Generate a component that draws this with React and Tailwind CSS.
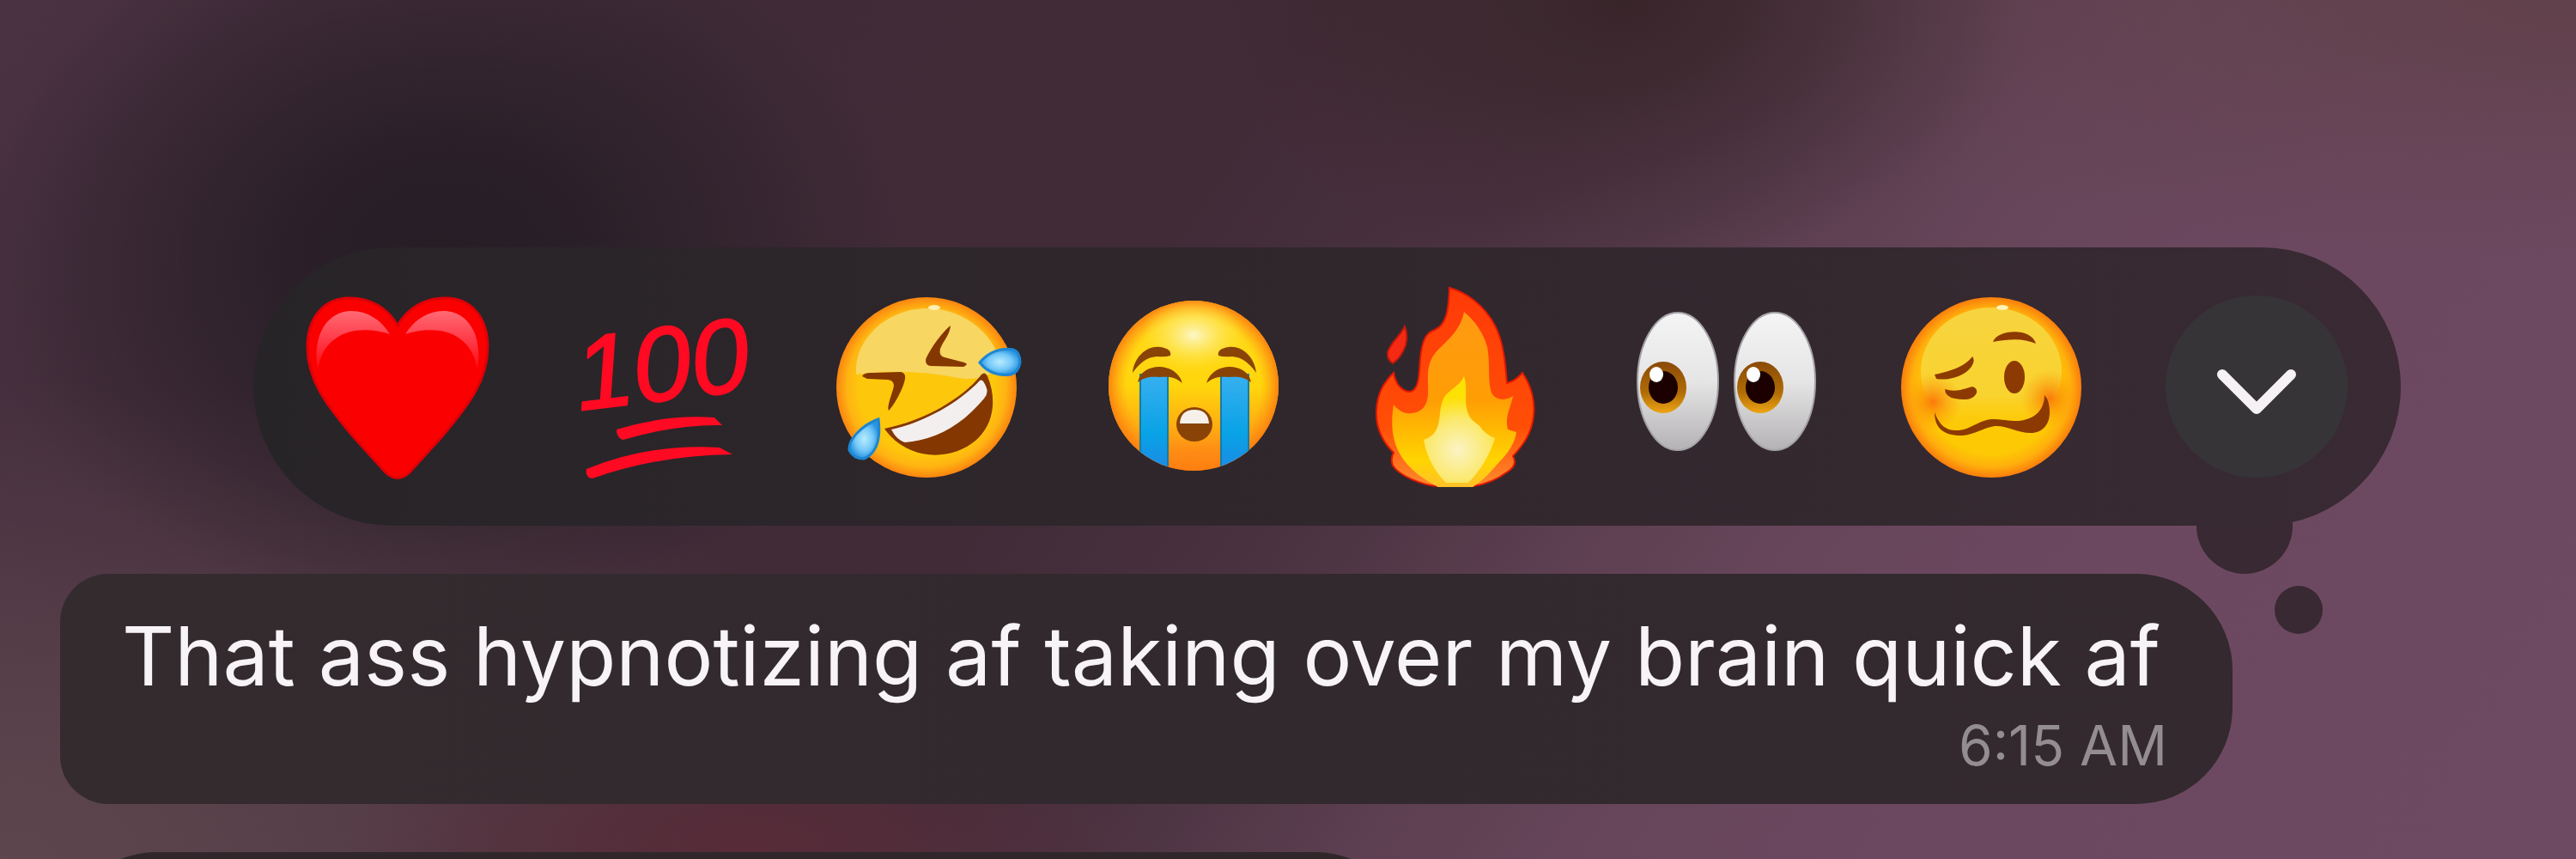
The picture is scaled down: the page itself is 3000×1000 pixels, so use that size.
import { ChevronDown } from 'lucide-react';

const Heart = () => (
    <svg viewBox="0 0 212 212" className="size-full overflow-visible" aria-hidden="true">
        <defs>
            <linearGradient id="heart-shine" x1="0" y1="0" x2="0" y2="1">
                <stop offset="0" stopColor="#ff6a74" />
                <stop offset="0.5" stopColor="#ff3a48" />
                <stop offset="1" stopColor="#ff0a10" />
            </linearGradient>
        </defs>
        <path
            d="M106 35C94 14 74 3 50 3C20 3 1 26 1 60C1 98 22 126 54 164L92 206Q106 219 120 206L158 164C190 126 211 98 211 60C211 26 192 3 162 3C138 3 118 14 106 35Z"
            fill="#fb0000"
            stroke="#dc0008"
            strokeWidth="3"
        />
        <path d="M13 86C6 44 26 18 52 18C72 18 88 30 97 45C76 38 50 38 34 50C22 58 16 70 13 86Z" fill="url(#heart-shine)" />
        <path d="M199 86C206 44 186 18 160 18C140 18 124 30 115 45C136 38 162 38 178 50C190 58 196 70 199 86Z" fill="url(#heart-shine)" />
    </svg>
);

const Hundred = () => (
    <svg viewBox="0 0 212 212" className="size-full overflow-visible" aria-hidden="true">
        <text
            x="6"
            y="122"
            fill="#ff0a22"
            stroke="#ff0a22"
            strokeWidth="2"
            strokeLinejoin="round"
            transform="rotate(-7 106 106)"
            className="font-['Liberation_Sans',sans-serif] text-[122px] italic"
        >
            100
        </text>
        <path d="M52 156Q110 138 166 142L175 151Q120 150 60 168Q52 166 52 156Z" fill="#ff0a22" />
        <path d="M17 202Q90 172 172 177L187 185Q100 186 24 213Q15 212 17 202Z" fill="#ff0a22" />
    </svg>
);

const Rofl = () => (
    <svg viewBox="0 0 212 212" className="size-full overflow-visible" aria-hidden="true">
        <defs>
            <radialGradient id="rofl-face">
                <stop offset="0.75" stopColor="#fdc70c" />
                <stop offset="0.88" stopColor="#ffb412" />
                <stop offset="1" stopColor="#fb8510" />
            </radialGradient>
            <radialGradient id="tear">
                <stop offset="0" stopColor="#b8ecff" />
                <stop offset="0.6" stopColor="#74c8f8" />
                <stop offset="1" stopColor="#2a94e0" />
            </radialGradient>
        </defs>
        <circle cx="103" cy="107" r="105" fill="url(#rofl-face)" />
        <path d="M21 92C18 48 60 15 104 15C150 15 186 50 189 82Q170 101 140 96Q80 84 21 92Z" fill="#f7d662" />
        <ellipse cx="112" cy="14" rx="7" ry="3" fill="#fff0b0" />
        <g fill="#843700">
            <path d="M131 35C120 44 106 64 102 75Q102 82 108 82L146 83Q153 80 147 78L124 72Q117 70 119 62C123 52 130 46 131 35Z" />
            <path d="M28 94Q30 90 38 90L73 89Q79 90 78 97C76 108 66 127 59 134C56 130 64 112 65 105Q65 99 58 98L34 97Z" />
            <path d="M54 155C100 146 145 120 167 92Q171 88 174 94C185 120 182 150 160 169C130 194 80 192 54 155Z" />
        </g>
        <path d="M62 156C100 148 142 124 165 99Q169 96 173 108Q175 114 170 120C145 150 115 168 78 171Q68 168 62 156Z" fill="#f3efee" />
        <path d="M165 78C175 66 190 60 204 63Q212 66 212 78Q210 90 201 92C188 94 174 90 165 78Z" fill="url(#tear)" stroke="#1d86d2" strokeWidth="3" />
        <path d="M47 144C30 150 12 166 13 180Q18 190 30 190C44 184 50 168 47 144Z" fill="url(#tear)" stroke="#1d86d2" strokeWidth="3" />
    </svg>
);

const Sob = () => (
    <svg viewBox="0 0 212 212" className="size-full overflow-visible" aria-hidden="true">
        <defs>
            <linearGradient id="sob-face" x1="0" y1="0" x2="0" y2="1">
                <stop offset="0" stopColor="#ffd91e" />
                <stop offset="0.5" stopColor="#ffd60c" />
                <stop offset="0.75" stopColor="#ffab12" />
                <stop offset="1" stopColor="#fd7016" />
            </linearGradient>
            <radialGradient id="sob-edge">
                <stop offset="0.78" stopColor="#ff9a10" stopOpacity="0" />
                <stop offset="1" stopColor="#fc7e10" />
            </radialGradient>
            <radialGradient id="sob-shine">
                <stop offset="0" stopColor="#fdf6c8" />
                <stop offset="1" stopColor="#fde94a" stopOpacity="0" />
            </radialGradient>
            <linearGradient id="sob-tears" x1="0" y1="0" x2="0" y2="1">
                <stop offset="0" stopColor="#38b0f0" />
                <stop offset="0.6" stopColor="#08a2e6" />
                <stop offset="1" stopColor="#1f88e4" />
            </linearGradient>
            <clipPath id="sob-clip">
                <circle cx="105" cy="105" r="99" />
            </clipPath>
        </defs>
        <g clipPath="url(#sob-clip)">
            <rect x="5" y="5" width="200" height="200" fill="url(#sob-face)" />
            <rect x="5" y="5" width="200" height="200" fill="url(#sob-edge)" />
            <ellipse cx="105" cy="46" rx="60" ry="42" fill="url(#sob-shine)" />
            <rect x="43" y="92" width="32" height="115" fill="url(#sob-tears)" stroke="#1a7ba6" strokeWidth="2" />
            <rect x="137" y="92" width="32" height="115" fill="url(#sob-tears)" stroke="#1a7ba6" strokeWidth="2" />
        </g>
        <g fill="#8a4306">
            <path d="M34 90C36 70 52 58 66 60Q80 62 78 70Q72 72 62 71C50 72 42 79 34 90Z" />
            <path d="M178 90C176 70 160 58 146 60Q132 62 134 70Q140 72 150 71C162 72 170 79 178 90Z" />
            <path d="M40 101C44 78 84 76 92 102C84 95 76 94 66 95C54 94 48 95 40 101Z" />
            <path d="M172 101C168 78 128 76 120 102C128 95 136 94 146 95C158 94 164 95 172 101Z" />
            <ellipse cx="106" cy="150" rx="21" ry="20" />
        </g>
        <path d="M89 149Q90 133 106 133Q122 133 123 149Z" fill="#f6f0ea" />
    </svg>
);

const Fire = () => (
    <svg viewBox="0 0 212 212" className="size-full overflow-visible" aria-hidden="true">
        <defs>
            <linearGradient id="fire-outer" x1="0" y1="0" x2="0" y2="1">
                <stop offset="0" stopColor="#ff3a08" />
                <stop offset="0.7" stopColor="#ff4e06" />
                <stop offset="1" stopColor="#ff8a2c" />
            </linearGradient>
            <linearGradient id="fire-mid" x1="0" y1="0" x2="0" y2="1">
                <stop offset="0" stopColor="#ff9a12" />
                <stop offset="0.5" stopColor="#ff9d05" />
                <stop offset="0.85" stopColor="#ffd400" />
                <stop offset="1" stopColor="#ffc22a" />
            </linearGradient>
            <radialGradient id="fire-core" gradientUnits="userSpaceOnUse" cx="104" cy="180" r="72">
                <stop offset="0" stopColor="#fbf3c4" />
                <stop offset="0.5" stopColor="#fbe96e" />
                <stop offset="0.85" stopColor="#fde004" />
            </radialGradient>
        </defs>
        <path
            d="M94 -9C112 -4 134 10 147 35C157 54 159 78 161 102C169 100 174 96 179 90C189 105 194 122 192 140C190 160 180 174 168 187C172 194 170 200 162 205C150 214 136 220 121 222H81C62 221 36 210 28 198Q25 190 29 183C14 168 8 152 9 134C10 112 19 100 29 90C31 102 38 112 48 112C61 110 58 84 61 66C63 52 67 43 77 40C91 34 93 16 94 -9Z"
            fill="url(#fire-outer)"
            stroke="#e01804"
            strokeWidth="2"
        />
        <path
            d="M111 19C124 30 134 44 138 60C142 80 138 104 144 115C150 123 162 122 168 117C166 130 158 140 162 156L172 159C170 174 160 186 150 196C140 208 132 216 121 223H81C64 214 46 202 36 184C26 166 26 146 29 127C36 136 44 138 50 137C62 136 68 128 69 116C70 100 66 88 74 72C82 58 106 46 111 19Z"
            fill="url(#fire-mid)"
        />
        <path
            d="M111 94C116 110 110 124 116 138C120 148 130 150 132 156C138 162 142 164 147 166C142 184 130 204 116 218H90C78 206 68 190 64 168C70 166 78 162 81 150C84 138 82 132 87 120C92 110 106 106 111 94Z"
            fill="url(#fire-core)"
        />
        <path d="M42 36Q46 46 43 58Q38 72 28 79Q21 74 22 66C26 54 36 48 42 36Z" fill="#f62a14" stroke="#c01808" strokeWidth="2" />
    </svg>
);

const Eyes = () => (
    <svg viewBox="0 0 212 212" className="size-full overflow-visible" aria-hidden="true">
        <defs>
            <linearGradient id="eye-white" x1="0" y1="0" x2="0" y2="1">
                <stop offset="0" stopColor="#f4f4f5" />
                <stop offset="0.5" stopColor="#e6e5e6" />
                <stop offset="1" stopColor="#b4b2b4" />
            </linearGradient>
            <linearGradient id="eye-iris" x1="0" y1="0" x2="0" y2="1">
                <stop offset="0" stopColor="#8a4a08" />
                <stop offset="0.6" stopColor="#b06c06" />
                <stop offset="1" stopColor="#eda414" />
            </linearGradient>
        </defs>
        {[0, 113].map((x) => (
            <g key={x} transform={`translate(${x})`}>
                <ellipse cx="51" cy="100" rx="47" ry="80" fill="url(#eye-white)" stroke="#a5a3a7" strokeWidth="2" />
                <ellipse cx="34" cy="107" rx="27" ry="30" fill="url(#eye-iris)" />
                <ellipse cx="34" cy="107" rx="17" ry="19" fill="#1c0000" />
                <ellipse cx="26" cy="92" rx="8" ry="9" fill="#ffffff" />
            </g>
        ))}
    </svg>
);

const Woozy = () => (
    <svg viewBox="0 0 212 212" className="size-full overflow-visible" aria-hidden="true">
        <defs>
            <radialGradient id="woozy-face">
                <stop offset="0.74" stopColor="#fdc904" />
                <stop offset="0.88" stopColor="#ffb00c" />
                <stop offset="1" stopColor="#fa7e0c" />
            </radialGradient>
            <linearGradient id="woozy-shine" x1="0" y1="0" x2="0" y2="1">
                <stop offset="0" stopColor="#f7d440" />
                <stop offset="0.7" stopColor="#f9d32e" />
                <stop offset="1" stopColor="#fdc904" stopOpacity="0" />
            </linearGradient>
            <radialGradient id="woozy-cheek">
                <stop offset="0" stopColor="#fb7a0a" />
                <stop offset="1" stopColor="#fca008" stopOpacity="0" />
            </radialGradient>
        </defs>
        <circle cx="106" cy="107" r="105" fill="url(#woozy-face)" />
        <ellipse cx="106" cy="88" rx="82" ry="74" fill="url(#woozy-shine)" />
        <ellipse cx="38" cy="124" rx="34" ry="34" fill="url(#woozy-cheek)" />
        <ellipse cx="174" cy="120" rx="34" ry="34" fill="url(#woozy-cheek)" />
        <ellipse cx="119" cy="14" rx="7" ry="3" fill="#fff3b8" />
        <g fill="#8c3a02">
            <path d="M108 54C112 40 152 36 158 56C144 50 130 50 108 54Z" />
            <path d="M40 92C58 88 74 84 84 71Q88 76 82 84C72 96 54 99 42 97Z" />
            <ellipse cx="133" cy="95" rx="12" ry="19" />
            <path d="M52 109Q60 112 70 110L84 106Q90 108 89 113C86 122 74 122 64 120Q52 118 52 109Z" />
            <path d="M40 136C46 152 54 158 68 157C82 156 92 145 106 144C122 144 134 148 144 145C158 142 168 132 168 116Q174 122 174 136C174 150 166 160 152 160C136 160 124 151 110 152C96 154 84 164 68 163C50 162 40 154 40 136Z" />
        </g>
    </svg>
);

const reactions = [
    { label: 'Red heart', Icon: Heart },
    { label: 'Hundred points', Icon: Hundred },
    { label: 'Rolling on the floor laughing', Icon: Rofl },
    { label: 'Loudly crying', Icon: Sob },
    { label: 'Fire', Icon: Fire },
    { label: 'Eyes', Icon: Eyes },
    { label: 'Woozy face', Icon: Woozy },
];

const ReactionBar = () => (
    <div className="relative ml-[225px] flex items-center justify-between rounded-full bg-linear-to-r from-[#272427] via-[#30272c] to-[#392a33] px-[62px] py-14">
        {reactions.map(({ label, Icon }) => (
            <button key={label} type="button" aria-label={label} className="size-[212px] shrink-0">
                <Icon />
            </button>
        ))}
        <button type="button" aria-label="More reactions" className="flex size-[212px] shrink-0 items-center justify-center rounded-full bg-[#373437] pt-3 text-[#f5f1f5]">
            <ChevronDown size={160} strokeWidth={1.8} />
        </button>

        {/* thought bubble tail */}
        <span className="absolute right-[126px] -bottom-14 -z-10 size-28 rounded-full bg-[#382932]" />
        <span className="absolute right-[91px] -bottom-[126px] size-14 rounded-full bg-[#382932]" />
    </div>
);

const App = () => {
    return (
        <main className="relative isolate h-screen overflow-hidden bg-[#6c4860] bg-[radial-gradient(ellipse_18%_42%_at_17%_30%,#261d25_0%,#261d25cc_35%,#261d2500_100%),radial-gradient(ellipse_16%_32%_at_63%_0%,#38252a_0%,#38252a00_100%),radial-gradient(ellipse_34%_30%_at_100%_0%,#61414b_0%,#61414b00_100%),radial-gradient(ellipse_16%_20%_at_29%_99%,#582b38_0%,#582b3800_100%),radial-gradient(ellipse_36%_56%_at_0%_100%,#5e464e_0%,#5c434dcc_40%,#5c434d00_100%),linear-gradient(124deg,#4a3242_0%,#3f2b37_22%,#412b37_42%,#4a3240_52%,#5c3f50_61%,#66455a_68%,#6c4860_78%,#6e4a62_100%)] pt-72 pr-[204px] pl-[70px] font-['Inter',sans-serif]">
            <div className="flex flex-col gap-14">
                <ReactionBar />

                <article className="mr-[196px] flex flex-col rounded-l-[56px] rounded-r-[112px] bg-linear-to-r from-[#342b2f] via-[#32292e] to-[#33292f] pt-10 pr-[76px] pb-8 pl-[72px]">
                    <p className="text-[95px] leading-[112px] whitespace-nowrap text-[#f7f3f7]">
                        That ass hypnotizing af taking over my brain quick af
                    </p>
                    <time className="mt-3 self-end text-[64px] leading-[72px] text-[#938d91]">6:15 AM</time>
                </article>

                <article className="h-56 w-[1574px] rounded-t-[112px] bg-[#30272b]" aria-label="Next message" />
            </div>
        </main>
    );
};

export default App;
